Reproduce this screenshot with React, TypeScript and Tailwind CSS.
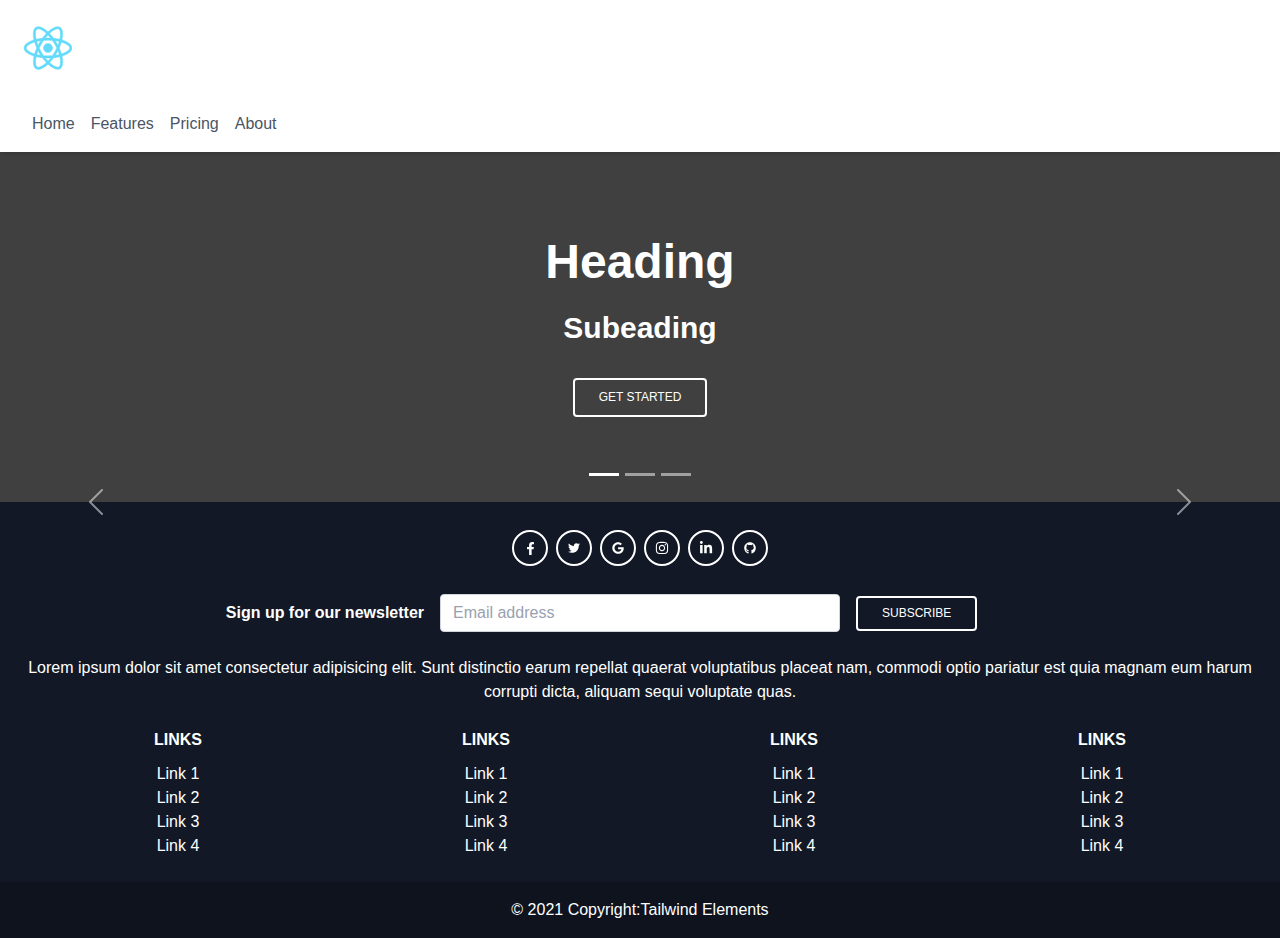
import React from "react";
import {
  FaFacebookF,
  FaTwitter,
  FaGoogle,
  FaInstagram,
  FaLinkedinIn,
  FaGithub,
} from "react-icons/fa";
import { SiReact } from "react-icons/si";

const navItems = ["Home", "Features", "Pricing", "About"];

const socials = [
  { label: "Facebook", Icon: FaFacebookF, size: "size-[13px]" },
  { label: "Twitter", Icon: FaTwitter, size: "size-3" },
  { label: "Google", Icon: FaGoogle, size: "size-3" },
  { label: "Instagram", Icon: FaInstagram, size: "size-3.5" },
  { label: "LinkedIn", Icon: FaLinkedinIn, size: "size-3.5" },
  { label: "GitHub", Icon: FaGithub, size: "size-3" },
];

const linkColumns = [1, 2, 3, 4];
const links = ["Link 1", "Link 2", "Link 3", "Link 4"];

function Header() {
  return (
    <header className="relative z-10 bg-white shadow-md">
      <div className="p-6">
        <a href="#" aria-label="React" className="block size-12">
          <SiReact className="size-12 stroke-[0.25] text-[#61dafb]" />
        </a>
      </div>
      <nav className="px-6 pt-4 pb-4">
        <ul className="flex">
          {navItems.map((item) => (
            <li key={item} className="px-2">
              <a href="#" className="text-gray-600">
                {item}
              </a>
            </li>
          ))}
        </ul>
      </nav>
    </header>
  );
}

function Chevron({ d }: { d: string }) {
  return (
    <svg viewBox="0 0 16 16" fill="#fff" className="size-8" aria-hidden="true">
      <path d={d} />
    </svg>
  );
}

function Hero() {
  return (
    <section className="relative flex h-[350px] flex-col items-center justify-center bg-[#404040] text-white">
      <h1 className="mb-6 text-5xl leading-none font-bold">Heading</h1>
      <h2 className="mb-8 text-3xl font-bold">Subeading</h2>
      <button
        type="button"
        className="rounded border-2 border-white px-6 py-2.5 text-xs leading-tight font-medium uppercase"
      >
        Get started
      </button>

      <div className="absolute inset-x-0 bottom-[26px] flex justify-center gap-1.5">
        <button type="button" aria-label="Slide 1" className="h-[3px] w-[30px] bg-white" />
        <button type="button" aria-label="Slide 2" className="h-[3px] w-[30px] bg-white/50" />
        <button type="button" aria-label="Slide 3" className="h-[3px] w-[30px] bg-white/50" />
      </div>

      <button
        type="button"
        aria-label="Previous"
        className="absolute -bottom-4 left-0 z-10 flex w-[15%] justify-center opacity-50"
      >
        <Chevron d="M11.354 1.646a.5.5 0 0 1 0 .708L5.707 8l5.647 5.646a.5.5 0 0 1-.708.708l-6-6a.5.5 0 0 1 0-.708l6-6a.5.5 0 0 1 .708 0z" />
      </button>
      <button
        type="button"
        aria-label="Next"
        className="absolute right-0 -bottom-4 z-10 flex w-[15%] justify-center opacity-50"
      >
        <Chevron d="M4.646 1.646a.5.5 0 0 1 .708 0l6 6a.5.5 0 0 1 0 .708l-6 6a.5.5 0 0 1-.708-.708L10.293 8 4.646 2.354a.5.5 0 0 1 0-.708z" />
      </button>
    </section>
  );
}

function Footer() {
  return (
    <footer className="bg-[#121826] text-center text-white">
      <div className="p-6">
        <div className="mb-6 flex justify-center">
          {socials.map(({ label, Icon, size }) => (
            <a
              key={label}
              href="#"
              aria-label={label}
              className="m-1 flex size-9 items-center justify-center rounded-full border-2 border-white"
            >
              <Icon className={size} />
            </a>
          ))}
        </div>

        <form
          className="mb-6 grid grid-cols-3 items-center gap-4"
          onSubmit={(event) => event.preventDefault()}
        >
          <label htmlFor="newsletter-email" className="text-right font-bold">
            Sign up for our newsletter
          </label>
          <input
            id="newsletter-email"
            type="email"
            placeholder="Email address"
            className="w-full rounded border border-gray-300 bg-white px-3 py-1.5 text-base text-gray-700 placeholder:text-gray-400"
          />
          <button
            type="submit"
            className="justify-self-start rounded border-2 border-white px-6 py-2 text-xs leading-tight font-medium uppercase"
          >
            Subscribe
          </button>
        </form>

        <p className="mb-6">
          Lorem ipsum dolor sit amet consectetur adipisicing elit. Sunt distinctio earum repellat
          quaerat voluptatibus placeat nam, commodi optio pariatur est quia magnam eum harum
          corrupti dicta, aliquam sequi voluptate quas.
        </p>

        <div className="grid grid-cols-4">
          {linkColumns.map((column) => (
            <div key={column}>
              <h5 className="mb-2.5 font-bold uppercase">Links</h5>
              <ul>
                {links.map((link) => (
                  <li key={link}>
                    <a href="#">{link}</a>
                  </li>
                ))}
              </ul>
            </div>
          ))}
        </div>
      </div>

      <div className="bg-black/20 p-4">
        © 2021 Copyright:<a href="#">Tailwind Elements</a>
      </div>
    </footer>
  );
}

export default function App() {
  return (
    <div className="font-['Liberation_Sans',Arial,sans-serif] text-base">
      <Header />
      <Hero />
      <Footer />
    </div>
  );
}
